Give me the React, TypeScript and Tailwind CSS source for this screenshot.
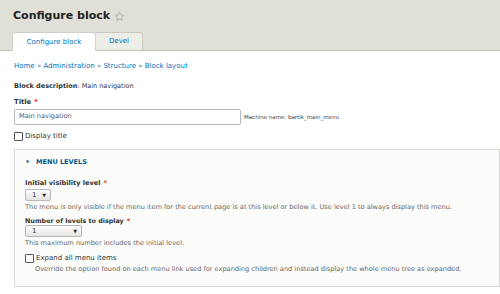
function Req() {
	return <span className="text-[#e32700] ml-[3px] font-bold">*</span>;
}

function Select({ value, width }: { value: string; width: string }) {
	return (
		<div
			className={`${width} h-[12px] flex items-center justify-between pl-[6px] pr-[4px] border border-[#b8b8b8] rounded-[2px] bg-gradient-to-b from-[#fdfdfd] to-[#e4e4e0] text-[7px] text-[#333]`}
		>
			<span>{value}</span>
			<span className="text-[5px] leading-none">▼</span>
		</div>
	);
}

function Checkbox() {
	return <span className="inline-block w-[9px] h-[9px] border border-[#555] bg-white rounded-[1px]" />;
}

export default function App() {
	return (
		<div className="w-[500px] h-[294px] overflow-hidden bg-white text-[#333] font-['DejaVu_Sans',sans-serif]">
			{/* Header */}
			<div className="h-[51px] bg-[#e0e0d8] border-b border-[#c0c0b9] flex flex-col">
				<div className="flex items-center pl-[13px] pt-[5px] h-[27px]">
					<h1 className="text-[11px] font-bold text-[#222]">Configure block</h1>
					<svg width="11" height="11" viewBox="0 0 24 24" className="ml-[4px]">
						<path
							d="M12 2.5l2.9 6.1 6.6.8-4.9 4.5 1.3 6.6L12 17.2l-5.9 3.3 1.3-6.6-4.9-4.5 6.6-.8z"
							fill="none"
							stroke="#a8a8a0"
							strokeWidth="1.7"
							strokeLinejoin="round"
						/>
					</svg>
				</div>
				<div className="flex items-end pl-[12px] mt-auto">
					<div className="w-[84px] h-[19px] bg-white rounded-t-[3px] border border-b-0 border-[#d0d0c8] flex items-center justify-center text-[7px] text-[#0074bd] -mb-px">
						Configure block
					</div>
					<div className="w-[47px] h-[18px] bg-[#eeeee8] rounded-tr-[3px] border border-l-0 border-b-0 border-[#c8c8c0] flex items-center justify-center text-[7px] text-[#0074bd]">
						Devel
					</div>
				</div>
			</div>

			<div className="pl-[14px]">
				{/* Breadcrumb */}
				<div className="mt-[10px] text-[7px] text-[#0074bd] leading-[10px]">
					Home <span className="text-[#5a7a90]">»</span> Administration <span className="text-[#5a7a90]">»</span> Structure{" "}
					<span className="text-[#5a7a90]">»</span> Block layout
				</div>

				<div className="mt-[10px] text-[6.5px] leading-[10px]">
					<span className="font-bold">Block description</span>: Main navigation
				</div>

				<div className="mt-[6px] text-[6.8px] leading-[10px] font-bold">
					Title
					<Req />
				</div>
				<div className="mt-[2px] flex items-center">
					<div className="w-[227px] h-[16px] border border-[#b8b8b8] rounded-[2px] bg-white flex items-center pl-[4px] text-[6.6px] text-[#555]">
						Main navigation
					</div>
					<span className="ml-[3px] text-[5.5px] text-[#444]">Machine name: bartik_main_menu</span>
				</div>

				<div className="mt-[6px] flex items-center gap-[2px] text-[7px] leading-[10px]">
					<Checkbox />
					<span>Display title</span>
				</div>

				{/* Fieldset */}
				<div className="mt-[8px] h-[138px] border border-[#d8d8d4] bg-[#fcfcfa] pl-[10px] pt-[7px]">
					<div className="flex items-center text-[6.5px] font-bold text-[#00588f] leading-[10px]">
						<span className="text-[4px] ml-[1px] mr-[7px]">▼</span>
						MENU LEVELS
					</div>

					<div className="mt-[11px] text-[6.6px] font-bold leading-[10px]">
						Initial visibility level
						<Req />
					</div>
					<div className="mt-[1px]">
						<Select value="1" width="w-[26px]" />
					</div>
					<div className="mt-[1px] text-[6.6px] text-[#666] leading-[10px] whitespace-nowrap">
						The menu is only visible if the menu item for the current page is at this level or below it. Use level 1 to always display this menu.
					</div>

					<div className="mt-[5px] text-[6.4px] font-bold leading-[8px]">
						Number of levels to display
						<Req />
					</div>
					<div>
						<Select value="1" width="w-[57px]" />
					</div>
					<div className="mt-[1px] text-[6.6px] text-[#666] leading-[10px]">
						This maximum number includes the initial level.
					</div>

					<div className="mt-[5px] flex items-center gap-[2px] text-[7px] leading-[10px]">
						<Checkbox />
						<span>Expand all menu items</span>
					</div>
					<div className="mt-[1px] pl-[10px] text-[6.6px] text-[#666] leading-[10px] whitespace-nowrap">
						Override the option found on each menu link used for expanding children and instead display the whole menu tree as expanded.
					</div>
				</div>
			</div>
		</div>
	);
}
